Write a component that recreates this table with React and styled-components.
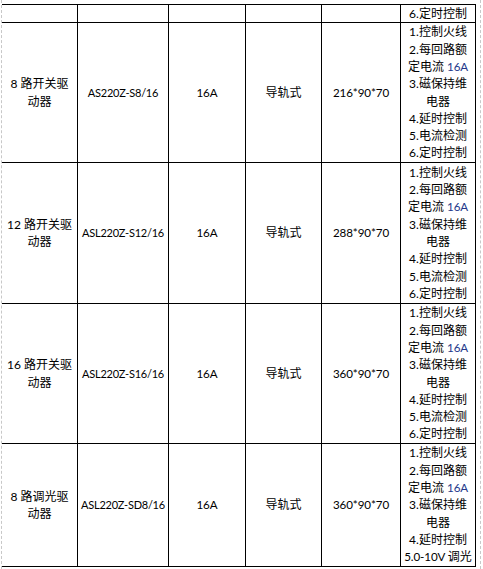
import React from "react";
import styled, { createGlobalStyle } from "styled-components";

const Global = createGlobalStyle`
  html, body { margin: 0; padding: 0; background: #ffffff; }
  body {
    font-family: "Lato", "Noto Sans CJK SC", sans-serif;
    font-size: 12px;
    color: #000;
  }
`;

const Page = styled.div`
  width: 483px;
  height: 569px;
  overflow: hidden;
  box-sizing: border-box;
  padding-left: 1px;
`;

const Sheet = styled.div`
  width: 480px;
  height: 569px;
  box-sizing: border-box;
  padding-top: 4px;
  border-left: 1px dashed #c8c8c8;
  border-right: 1px dashed #c8c8c8;
`;

const Table = styled.div`
  display: flex;
  flex-direction: column;
  width: 474px;
  border-top: 1px solid #000;
`;

const Row = styled.div`
  display: grid;
  grid-template-columns: 76px 91px 77px 76px 79px 75px;
  height: ${(p) => p.$h}px;
`;

const Cell = styled.div`
  box-sizing: border-box;
  border-right: 1px solid #000;
  border-bottom: 1px solid #000;
  display: flex;
  align-items: center;
  justify-content: center;
  text-align: center;
  overflow: hidden;
  line-height: 17.3px;
  white-space: nowrap;
`;

const Lines = styled.div`
  display: flex;
  flex-direction: column;
  align-items: center;
`;

const Line = styled.span`
  display: block;
  height: 17.3px;
`;

const Latin = styled.span`
  font-family: "Lato", sans-serif;
  font-size: ${(p) => (p.$tight ? "11px" : "11.6px")};
  letter-spacing: ${(p) => (p.$tight ? "-0.25px" : "-0.1px")};
  color: ${(p) => (p.$blue ? "#22388a" : "inherit")};
`;

const featuresFull = [
  "1.控制火线",
  "2.每回路额",
  "RATED",
  "3.磁保持维",
  "电器",
  "4.延时控制",
  "5.电流检测",
  "6.定时控制",
];

const featuresDim = [
  "1.控制火线",
  "2.每回路额",
  "RATED",
  "3.磁保持维",
  "电器",
  "4.延时控制",
  "DIM",
];

function Features({ items }) {
  return (
    <Lines>
      {items.map((t, i) => {
        if (t === "RATED")
          return (
            <Line key={i}>
              定电流 <Latin $blue>16A</Latin>
            </Line>
          );
        if (t === "DIM")
          return (
            <Line key={i}>
              <Latin>5.0-10V </Latin>调光
            </Line>
          );
        return <Line key={i}>{t}</Line>;
      })}
    </Lines>
  );
}

const rows = [
  { h: 140, name: ["8 路开关驱", "动器"], model: "AS220Z-S8/16", size: "216*90*70", f: featuresFull },
  { h: 141, name: ["12 路开关驱", "动器"], model: "ASL220Z-S12/16", size: "288*90*70", f: featuresFull },
  { h: 140, name: ["16 路开关驱", "动器"], model: "ASL220Z-S16/16", size: "360*90*70", f: featuresFull },
  { h: 123, name: ["8 路调光驱", "动器"], model: "ASL220Z-SD8/16", size: "360*90*70", f: featuresDim },
];

export default function App() {
  return (
    <>
      <Global />
      <Page>
        <Sheet>
          <Table>
            <Row $h={18}>
              <Cell />
              <Cell />
              <Cell />
              <Cell />
              <Cell />
              <Cell>6.定时控制</Cell>
            </Row>
            {rows.map((r, i) => (
              <Row key={i} $h={r.h}>
                <Cell>
                  <Lines>
                    {r.name.map((n, j) => (
                      <Line key={j}>{n}</Line>
                    ))}
                  </Lines>
                </Cell>
                <Cell>
                  <Latin $tight>{r.model}</Latin>
                </Cell>
                <Cell>
                  <Latin>16A</Latin>
                </Cell>
                <Cell>导轨式</Cell>
                <Cell>
                  <Latin>{r.size}</Latin>
                </Cell>
                <Cell>
                  <Features items={r.f} />
                </Cell>
              </Row>
            ))}
          </Table>
        </Sheet>
      </Page>
    </>
  );
}
